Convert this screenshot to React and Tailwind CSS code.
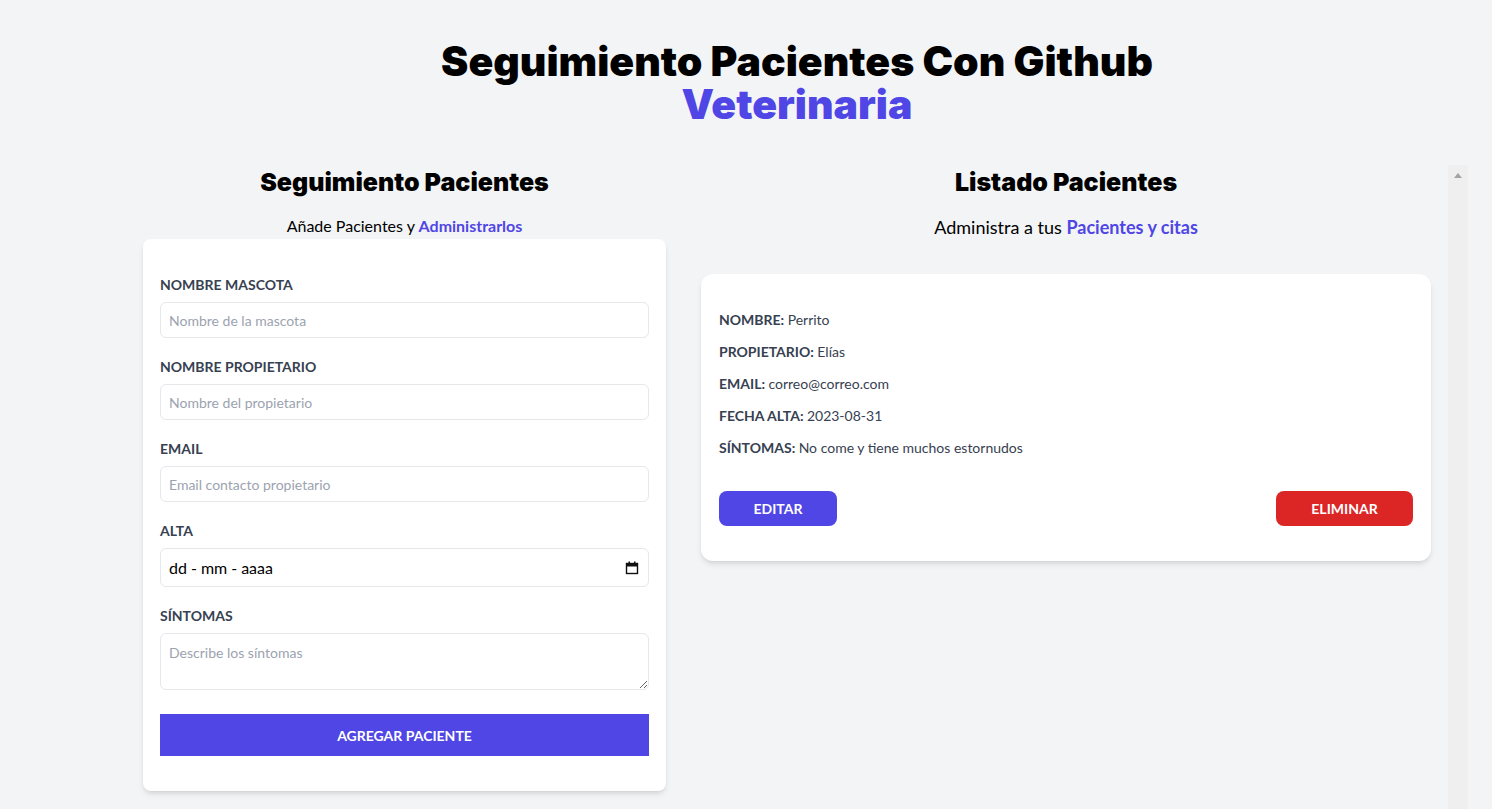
import React from "react";

const font = { fontFamily: "Lato, 'Noto Sans', sans-serif" };
const heavy = { fontFamily: "Inter, 'Noto Sans', sans-serif" };

function Field({ label, children }) {
  return (
    <div className="mb-[19px]">
      <label className="block text-[14px] leading-5 font-bold text-[#374151] uppercase">{label}</label>
      <div className="mt-[7px]">{children}</div>
    </div>
  );
}

function Row({ k, v }) {
  return (
    <p className="mb-3 text-[14px] leading-5 text-[#374151]">
      <span className="font-bold uppercase">{k}: </span>
      {v}
    </p>
  );
}

const inputCls =
  "w-full h-9 border border-[#e5e7eb] rounded-md px-2 text-[14px] placeholder-[#9ca3af] outline-none";

export default function App() {
  return (
    <div className="min-h-screen bg-[#f3f4f6] overflow-hidden" style={font}>
      <div className="pt-[40px] pl-[102px] flex justify-center">
        <h1 className="text-[41px] leading-[43px] font-black text-black text-center" style={heavy}>
          Seguimiento Pacientes Con Github
          <br />
          <span className="text-[#4f46e5]">Veterinaria</span>
        </h1>
      </div>

      <div className="mt-[39px] flex">
        <div className="ml-[143px] w-[523px]">
          <h2 className="text-[25px] leading-[34px] font-black text-center text-black" style={heavy}>Seguimiento Pacientes</h2>
          <p className="mt-[15px] text-[16px] leading-6 text-center text-black">
            Añade Pacientes y <span className="text-[#4f46e5] font-bold">Administrarlos</span>
          </p>
          <form className="mt-px bg-white rounded-lg shadow-md pt-9 pb-[35px] px-[17px]">
            <Field label="Nombre Mascota">
              <input className={inputCls} placeholder="Nombre de la mascota" />
            </Field>
            <Field label="Nombre Propietario">
              <input className={inputCls} placeholder="Nombre del propietario" />
            </Field>
            <Field label="Email">
              <input className={inputCls} placeholder="Email contacto propietario" />
            </Field>
            <Field label="Alta">
              <div className="w-full h-[39px] border border-[#e5e7eb] rounded-md px-2 flex items-center justify-between text-[16px] text-black">
                <span>
                  dd<span className="mx-[4px]">-</span>mm<span className="mx-[4px]">-</span>aaaa
                </span>
                <svg width="14" height="14" viewBox="0 0 14 14" className="mr-[1px]">
                  <rect x="1.5" y="2.5" width="11" height="10" fill="none" stroke="#111" strokeWidth="1.4" />
                  <rect x="1.5" y="2.5" width="11" height="3" fill="#111" />
                  <rect x="3.5" y="0.5" width="1.5" height="2.5" fill="#111" />
                  <rect x="9" y="0.5" width="1.5" height="2.5" fill="#111" />
                </svg>
              </div>
            </Field>
            <Field label="Síntomas">
              <textarea className="block w-full h-[57px] border border-[#e5e7eb] rounded-md px-2 py-2 text-[14px] placeholder-[#9ca3af] outline-none" placeholder="Describe los síntomas" />
            </Field>
            <button type="button" className="mt-[5px] w-full h-[42px] bg-[#4f46e5] text-white text-[14px] font-bold uppercase">
              Agregar Paciente
            </button>
          </form>
        </div>

        <div className="ml-[35px] w-[730px]">
          <h2 className="text-[25px] leading-[34px] font-black text-center text-black" style={heavy}>Listado Pacientes</h2>
          <p className="mt-[16px] text-[18px] leading-6 text-center text-black">
            Administra a tus <span className="text-[#4f46e5] font-bold">Pacientes y citas</span>
          </p>
          <div className="mt-[35px] bg-white rounded-xl shadow-md px-[18px] pt-9 pb-[35px]">
            <Row k="Nombre" v="Perrito" />
            <Row k="Propietario" v="Elías" />
            <Row k="Email" v="correo@correo.com" />
            <Row k="Fecha Alta" v="2023-08-31" />
            <Row k="Síntomas" v="No come y tiene muchos estornudos" />
            <div className="mt-[33px] flex justify-between">
              <button type="button" className="w-[118px] h-[35px] rounded-lg bg-[#4f46e5] text-white text-[14px] font-bold uppercase">Editar</button>
              <button type="button" className="w-[137px] h-[35px] rounded-lg bg-[#dc2626] text-white text-[14px] font-bold uppercase">Eliminar</button>
            </div>
          </div>
        </div>

        <div className="ml-[17px] w-[20px] h-[700px] bg-[#efefef] flex justify-center pt-[8px]">
          <div className="w-0 h-0 border-l-[4px] border-r-[4px] border-b-[5px] border-l-transparent border-r-transparent border-b-[#a3a3a3]" />
        </div>
      </div>
    </div>
  );
}
